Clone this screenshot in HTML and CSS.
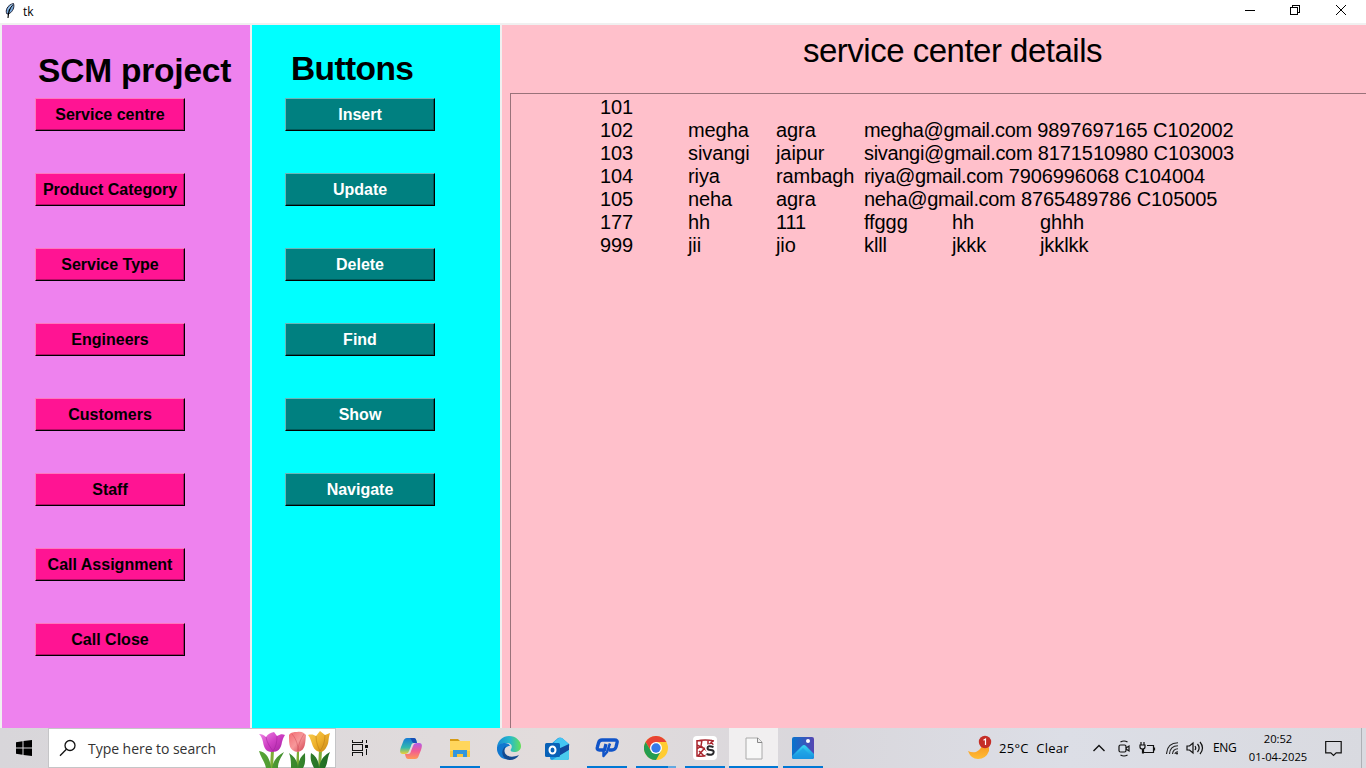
FILE: index.html
```html
<!DOCTYPE html>
<html lang="en">
<head>
<meta charset="utf-8">
<title>tk</title>
<link rel="stylesheet" href="styles.css">
</head>
<body>
<header class="titlebar">
  <svg class="feather" width="10" height="17" viewBox="0 0 10 17"><path d="M2 12C0 9 2 3 8.500 1.500c1.300 4-1 8-4 10z" fill="#78a9dc" stroke="#223" stroke-width="1"/><path d="M7.500 3C4 7 3.500 10 3 16" fill="none" stroke="#000" stroke-width="1.100"/><path d="M7 2.500 3.500 7" stroke="#b9d6f3"/></svg>
  <span class="title">tk</span>
  <div class="controls">
    <svg width="45" height="22" viewBox="0 0 45 22" stroke="#000" fill="none" shape-rendering="crispEdges"><path d="M18 10.500h10"/></svg>
    <svg width="46" height="22" viewBox="0 0 46 22" stroke="#000" fill="none" shape-rendering="crispEdges"><path d="M18.500 7.500h7v7h-7zM20.500 7V5.500h7v7H26"/></svg>
    <svg width="46" height="22" viewBox="0 0 46 22" stroke="#000" fill="none"><path d="m18 5 10 10M28 5 18 15"/></svg>
  </div>
</header>
<main class="workspace">
  <nav class="panel menu">
    <h1 class="heading">SCM project</h1>
    <div class="stack">
      <button>Service centre</button>
      <button>Product Category</button>
      <button>Service Type</button>
      <button>Engineers</button>
      <button>Customers</button>
      <button>Staff</button>
      <button>Call Assignment</button>
      <button>Call Close</button>
    </div>
  </nav>
  <section class="panel actions">
    <h1 class="heading">Buttons</h1>
    <div class="stack">
      <button>Insert</button>
      <button>Update</button>
      <button>Delete</button>
      <button>Find</button>
      <button>Show</button>
      <button>Navigate</button>
    </div>
  </section>
  <section class="details">
    <h2 class="details-title">service center details</h2>
    <pre class="listing">&#9;101
&#9;102&#9;megha&#9;agra&#9;<span class="email">megha@gmail.com</span> 9897697165 C102002
&#9;103&#9;sivangi&#9;jaipur&#9;<span class="email">sivangi@gmail.com</span> 8171510980 C103003
&#9;104&#9;riya&#9;rambagh&#9;<span class="email">riya@gmail.com</span> 7906996068 C104004
&#9;105&#9;neha&#9;agra&#9;<span class="email">neha@gmail.com</span> 8765489786 C105005
&#9;177&#9;hh&#9;111&#9;ffggg&#9;hh&#9;ghhh
&#9;999&#9;jii&#9;jio&#9;klll&#9;jkkk&#9;jkklkk</pre>
  </section>
</main>
<footer class="taskbar">
  <div class="start"><svg width="16" height="16" viewBox="0 0 16 16"><path d="M0 2.200 6.500 1.300v6.200H0zM7.500 1.100 16 0v7.500H7.500zM0 8.500h6.500v6.200L0 13.800zM7.500 8.500H16V16l-8.500-1.100z"/></svg></div>
  <div class="search">
    <svg width="18" height="18" viewBox="0 0 18 18" fill="none" stroke="#111" stroke-width="1.300"><circle cx="11" cy="6.500" r="5"/><path d="M7.400 10.200 1 16.700"/></svg>
    <span class="hint">Type here to search</span>
    <svg class="tulips" width="72" height="37" viewBox="0 0 72 37">
      <defs>
        <linearGradient id="pu" x2="1" y2="1"><stop stop-color="#f08be6"/><stop offset=".5" stop-color="#cf3fc4"/><stop offset="1" stop-color="#a3209f"/></linearGradient>
        <linearGradient id="re" x2="1" y2="1"><stop stop-color="#f26b72"/><stop offset=".5" stop-color="#f7989a"/><stop offset="1" stop-color="#cf3d4c"/></linearGradient>
        <linearGradient id="ye" x2="1" y2="1"><stop stop-color="#f8cf51"/><stop offset=".5" stop-color="#eeb02b"/><stop offset="1" stop-color="#c58412"/></linearGradient>
        <linearGradient id="gr" x2="1"><stop stop-color="#59a536"/><stop offset="1" stop-color="#1d6b24"/></linearGradient>
      </defs>
      <path d="M13 19h3l-1 18h-3zM39 19h2v18h-3zM61 19h3l-1 18h-3z" fill="#7ead35"/>
      <path d="M1 20c7 1 11 7 12 17H8C7 31 3 27 1 20zM26 21c-7 4-11 9-12 16h6c0-7 3-10 6-16zM31 22c6 4 9 9 9 15h-7c0-6 0-10-2-15zM47 22c-5 4-7 9-7 15h5c3-5 2-10 2-15zM53 22c5 3 8 8 8 15h-5c-3-6-4-9-3-15zM72 21c-7 4-10 9-11 16h6c3-5 2-10 5-16z" fill="url(#gr)"/>
      <path d="M1 3c3 0 5 1 7 3 2-3 4-4 8-5l3 4c4-2 5-2 8-1-2 3-2 4-3 7-1 7-4 10-10 10C8 21 6 17 5 11 4 7 3 5 1 3z" fill="url(#pu)"/><path d="M8 6c1 6 4 10 7 14 3-4 4-9 4-15" fill="none" stroke="#9f2099" opacity=".5"/>
      <path d="M31 4c2-3 5-3 8-3 5-1 7 1 9 3-1 8 0 15-8 17-9-1-9-7-9-17z" fill="url(#re)"/><path d="M34 3c5 6 6 12 6 17M46 3c-4 6-6 12-6 17" fill="none" stroke="#cd4655" opacity=".45"/>
      <path d="M50 4c4-1 6 0 8 1l4-5 5 4 5-2c-2 6-1 10-3 13-2 4-4 6-7 6-9-2-7-11-12-17z" fill="url(#ye)"/><path d="M58 5c0 6 2 11 4 15 3-4 5-9 5-16" fill="none" stroke="#b87610" opacity=".5"/>
    </svg>
  </div>
  <div class="apps">
    <div class="app task-view"><svg width="18" height="18" viewBox="0 0 18 18" fill="none" stroke="#111" stroke-width="1.300" shape-rendering="crispEdges"><path d="M1.500 1v2.500h10V1M1.500 17v-3.500h10V17M1.500 5.500h10v6h-10zM15.500 1v3M15.500 10v6"/><path d="M14 6h3v3h-3z" fill="#111" stroke="none"/></svg></div>
    <div class="app"><svg width="22" height="21" viewBox="0 0 22 21"><defs><linearGradient id="c1" x2="0" y2="1"><stop stop-color="#177bd5"/><stop offset=".6" stop-color="#32b9ae"/><stop offset="1" stop-color="#f1cf31"/></linearGradient><linearGradient id="c2" x2="0" y2="1"><stop stop-color="#b35be7"/><stop offset=".5" stop-color="#f25c92"/><stop offset="1" stop-color="#ff9857"/></linearGradient></defs><path d="M7 0h7c2 0 2.500 3 3 5h-3c-2 0-2.500 1-3 3l-2 5c-.500 2-2 3-4 3H3c-4 0-3-4-2-7l2-5c1-3 2-4 4-4z" fill="url(#c1)"/><path d="M15 21H8c-2 0-2.500-3-3-5h3c2 0 2.500-1 3-3l2-5c.500-2 2-3 4-3h2c4 0 3 4 2 7l-2 5c-1 3-2 4-4 4z" fill="url(#c2)"/><path d="M10 0h4c2 0 2.500 3 3 5h-3c-2 0-2-3-4-5z" fill="#174fb5"/></svg></div>
    <div class="app open"><svg width="22" height="20" viewBox="0 0 22 20"><path d="M1 1h8l2 2H1z" fill="#d69b15"/><path d="M1 3h20v16H1z" fill="#ffd65c"/><path d="M1 13h20v6H1z" fill="#f9c640"/><path d="M4 12h14v7h-4v-3H8v3H4z" fill="#3296df"/></svg></div>
    <div class="app"><svg width="24" height="24" viewBox="0 0 24 24"><defs><linearGradient id="e1" x2="1"><stop stop-color="#168bd5"/><stop offset=".55" stop-color="#27bacb"/><stop offset="1" stop-color="#65df58"/></linearGradient></defs><path d="M0 11C1 4 6 0 12 0c7 0 12 5 12 10 0 4-3 6-7 6-3 0-4-1-3-3 2-3 0-6-4-6-5 0-8 2-10 4z" fill="url(#e1)"/><path d="M0 11c2-4 11-6 13-1-7 0-8 9-1 13C5 25-1 18 0 11z" fill="#1178cf"/><path d="M9 10c-5 7 2 14 13 9-3 5-9 6-13 4-5-3-5-10 0-13z" fill="#134b91"/></svg></div>
    <div class="app"><svg width="25" height="23" viewBox="0 0 25 23"><path d="m5 8 8-7q2-1 4 0l7 6v14q0 2-2 2H7q-2 0-2-2z" fill="#1b9be0"/><path d="m9 5 5-4h3l8 7-11 6z" fill="#44c5f3"/><path d="m11 13 13-6v6l-9 6z" fill="#12479c"/><path d="m7 23 17-10v8q0 2-2 2z" fill="#4bcbed"/><rect y="6" width="15" height="14" rx="1.500" fill="#0861b7"/><ellipse cx="7.500" cy="13" rx="3" ry="3.600" fill="none" stroke="#fff" stroke-width="2"/></svg></div>
    <div class="app open"><svg width="24" height="20" viewBox="0 0 24 20" fill="none" stroke="#1154c8" stroke-width="3.300" stroke-linejoin="round"><path d="M11 6 9.500 12H4.500Q1.500 12 2.400 9L3.500 5Q4.300 2 7 2H19.500Q23 2 22 5L21 9Q20 12 17 12h-3"/><path d="M15 5.500 12 14 8.500 18V12" stroke-width="2.500"/></svg></div>
    <div class="app open grouped"><svg width="24" height="24" viewBox="0 0 24 24"><circle cx="12" cy="12" r="12" fill="#ffcc32"/><path d="M1.600 6A12 12 0 0 1 22.400 6H12L7 15z" fill="#e84334"/><path d="M1.600 6A12 12 0 0 0 12 24l5-9-5 3-5-3z" fill="#249d50"/><circle cx="12" cy="12" r="6" fill="#fff"/><circle cx="12" cy="12" r="4.700" fill="#3479e9"/></svg></div>
    <div class="app open"><svg width="24" height="24" viewBox="0 0 24 24"><rect width="24" height="24" rx="4" fill="#fff"/><g fill="none" stroke="#a9252d" stroke-width="1.500"><path d="M4 5q8-2 17 0M4 4v16q6 1 10-1M9 4 8 10l-4 3M8 10l6 5M20 5l-10 9-5 6M4 9l6 3M15 4v7M6 15l5 5M18 4l2 5"/></g><path d="M20 11q-6-2-6 1 0 2 3 2 4 0 3 3-1 3-7 1" fill="none" stroke="#fff" stroke-width="4"/><path d="M20.500 11q-6-2-6 1 0 2 3 2 4 0 3 3-1 3-7 1" fill="none" stroke="#29282b" stroke-width="2"/></svg></div>
    <div class="app open current"><svg width="18" height="23" viewBox="0 0 18 23"><path d="M1 1h12l4 4v17H1z" fill="#f8f8f8" stroke="#aaa"/><path d="M12.500 1v4.500H17" fill="#eee" stroke="#888"/></svg></div>
    <div class="app open"><svg width="22" height="22" viewBox="0 0 22 22"><defs><linearGradient id="p1" x2="1"><stop stop-color="#0874cd"/><stop offset="1" stop-color="#5646b2"/></linearGradient><linearGradient id="p2" x2="0" y2="1"><stop stop-color="#36d6f4"/><stop offset="1" stop-color="#138bdc"/></linearGradient><clipPath id="pc"><rect width="22" height="22" rx="2"/></clipPath></defs><g clip-path="url(#pc)"><path d="M0 0h22v22H0z" fill="url(#p1)"/><path d="m0 19 10-10q2-2 4 0l8 8v5H0z" fill="url(#p2)"/><path d="m0 22 11-11 11 11z" fill="#1c9be5" opacity=".6"/><circle cx="16" cy="4" r="2" fill="#fff"/></g></svg></div>
  </div>
  <div class="tray">
    <svg class="moon" width="24" height="25" viewBox="0 0 24 25"><defs><linearGradient id="m" x2="0" y2="1"><stop stop-color="#f58818"/><stop offset="1" stop-color="#ffbd36"/></linearGradient></defs><path d="M14 5q8 4 7 11-3 8-11 8-7 0-10-8 4 2 8 1 7-3 6-12z" fill="url(#m)"/><circle cx="17" cy="7" r="6.200" fill="#c52e27"/><path d="M15.500 5.200 17.500 4v6" stroke="#fff" stroke-width="1.200" fill="none"/></svg>
    <span class="weather">25°C&nbsp; Clear</span>
    <svg class="chevron" width="14" height="10" viewBox="0 0 14 10" fill="none" stroke="#111" stroke-width="1.400"><path d="m1.500 8 5.500-5.500L12.500 8"/></svg>
    <svg class="meet" width="12" height="17" viewBox="0 0 12 17" fill="none" stroke="#111" stroke-width="1.200"><rect x="1" y="5" width="7" height="7" rx="1.500"/><path d="m8 8 3-2v5L8 9M2.500 2Q6 0 9.500 2M2.500 15Q6 17 9.500 15"/></svg>
    <svg class="battery" width="17" height="12" viewBox="0 0 17 12" fill="none" stroke="#111" stroke-width="1.200"><path d="M8 3.500h6.500v7H4.500V7M15.500 5.500v3M2 0v3M5 0v3M1 3h5v2q0 2-2.500 2T1 5zM3.500 7v4H5"/></svg>
    <svg class="wifi" width="13" height="13" viewBox="0 0 13 13" fill="none" stroke="#222" stroke-width="1.100"><path d="M.500 12Q1 1 12 .800M3.500 12Q4 4 12 3.800M6.500 12Q7 7 12 6.800M9 12q0-2 3-2.300"/><circle cx="11" cy="11.500" r="1" fill="#111" stroke="none"/></svg>
    <svg class="sound" width="18" height="14" viewBox="0 0 18 14" fill="none" stroke="#111" stroke-width="1.200"><path d="M1 5h2.500L7 2v10L3.500 9H1zM9 5q1.500 2 0 4M11.500 3q3.300 4 0 8M14 1q5 6 0 12"/></svg>
    <span class="lang">ENG</span>
    <div class="clock"><span class="time">20:52</span><span class="date">01-04-2025</span></div>
    <svg class="notes" width="17" height="17" viewBox="0 0 17 17" fill="none" stroke="#111" stroke-width="1.200"><path d="M.700 1.500h15.500v11.300h-5L8.500 15.500 5.800 12.800H.700z"/></svg>
    <div class="show-desktop"></div>
  </div>
</footer>
</body>
</html>
```
FILE: styles.css
```css
* { box-sizing: border-box; }
body {
  margin: 0;
  width: 1366px;
  height: 768px;
  overflow: hidden;
  display: flex;
  flex-direction: column;
  font-family: "Liberation Sans", Arial, sans-serif;
  color: #000;
  background: #f0f0f0;
}
svg { display: block; flex: none; }
.titlebar { height: 23px; display: flex; background: #fff; padding: 0 2px 0 5px; }
.feather { margin-top: 2px; }
.title { margin-left: 8px; font: 12px/23px "Open Sans", sans-serif; }
.controls { display: flex; margin-left: auto; }
.workspace { flex: 1; display: flex; gap: 2px; padding: 2px 0 0 2px; min-height: 0; }
.panel { width: 248px; padding-left: 33px; }
.menu { background: violet; }
.actions { background: cyan; }
.heading { margin: 0; height: 73px; font-size: 33.5px; line-height: 40px; white-space: nowrap; }
.menu .heading { padding: 26px 0 0 3px; letter-spacing: -0.2px; }
.actions .heading { padding: 24px 0 0 6px; letter-spacing: -0.6px; }
.stack { display: flex; flex-direction: column; gap: 42px; }
.stack button {
  width: 150px;
  height: 33px;
  padding: 0;
  border: 1px solid;
  border-radius: 0;
  font: bold 16px/31px "Liberation Sans", Arial, sans-serif;
}
.menu button {
  color: #000;
  background: #ff1493;
  border-color: #ff76be #000 #000 #ff76be;
  box-shadow: inset -1px -1px #b30e67;
}
.actions button {
  color: #fff;
  background: teal;
  border-color: #69b6b6 #000 #000 #69b6b6;
  box-shadow: inset -1px -1px #005a5a;
}
.details { flex: 1; display: flex; flex-direction: column; min-width: 0; padding-left: 8px; background: pink; }
.details-title { margin: 0; height: 68px; padding: 6px 0 0 293px; font-size: 33px; line-height: 40px; font-weight: normal; letter-spacing: -0.5px; white-space: nowrap; }
.listing {
  flex: 1;
  margin: 0;
  padding: 2px 0 0 1px;
  border: solid #99727a;
  border-width: 1px 0 0 1px;
  font: 20px/23px "Liberation Sans", Arial, sans-serif;
  letter-spacing: -0.09px;
  tab-size: 88px;
}
.email { letter-spacing: -0.32px; }
.taskbar {
  height: 40px;
  display: flex;
  font-family: "Open Sans", sans-serif;
  background: linear-gradient(90deg, #d8d6da, #e0dbdc 32%, #e2dcdc 40%, #d9d7dc 60%, #dcdee6 78%, #d9dae0);
}
.start { width: 48px; padding: 12px 0 0 16px; }
.search { width: 288px; display: flex; padding: 10px 0 0 10px; border: 1px solid #c5c5c7; background: #fff; }
.hint { margin-left: 11px; font-size: 14px; line-height: 20px; color: #333; white-space: nowrap; letter-spacing: -0.04px; }
.tulips { margin: -8px 5px 0 auto; }
.apps { display: flex; }
.app { width: 49px; height: 40px; display: flex; flex-direction: column; align-items: center; justify-content: center; position: relative; }
.task-view { width: 50px; padding-right: 2px; }
.open::after { content: ""; position: absolute; bottom: 0; left: 5px; width: 40px; height: 2px; background: #0078d4; }
.grouped::after { background: linear-gradient(90deg, #0078d4 32px, #62a9e1 32px); }
.current { background: #f1eff0; }
.current::after { left: 0; width: 49px; }
.tray { flex: 1; display: flex; padding-left: 141px; font-size: 12px; line-height: 16px; white-space: nowrap; }
.moon { margin-top: 7px; }
.weather { margin: 12px 0 0 7px; width: 70px; font-size: 13px; letter-spacing: 0.3px; }
.chevron { margin: 15px 0 0 23px; }
.meet { margin: 12px 0 0 12px; }
.battery { margin: 14px 0 0 9px; }
.wifi { margin: 14px 0 0 10px; }
.sound { margin: 13px 0 0 7px; }
.lang { margin: 12px 0 0 9px; width: 25px; letter-spacing: -0.3px; }
.clock { display: flex; flex-direction: column; align-items: center; width: 60px; margin: 2px 0 0 10px; font-size: 11.2px; line-height: 18px; }
.notes { margin: 12px 0 0 17px; }
.show-desktop { width: 5px; margin-left: auto; border-left: 1px solid #aeb0b5; }
```
